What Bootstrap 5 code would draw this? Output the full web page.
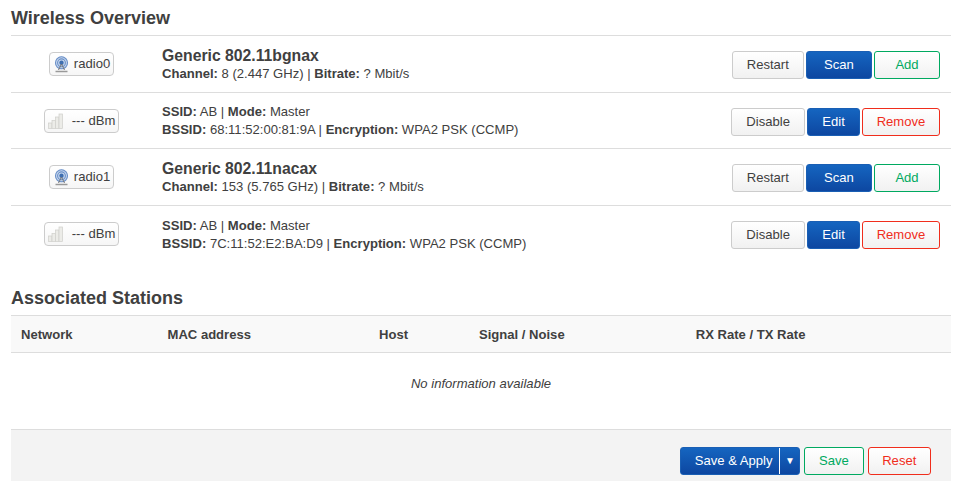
<!DOCTYPE html>
<html lang="en">
<head>
  <meta charset="UTF-8">
  <meta name="viewport" content="width=device-width, initial-scale=1">
  <title>Wireless Overview</title>
  <link href="https://cdn.jsdelivr.net/npm/bootstrap@5.3.0/dist/css/bootstrap.min.css" rel="stylesheet">
  <style>
    html, body { height: 481px; overflow: hidden; }
    body { font-family: "Liberation Sans", Arial, sans-serif; font-size: 13.07px; line-height: 18px; color: #404040; background: #fff; }
    .page-wrap { padding: 0 7px 0 11px; }
    .sec-title { font-size: 18px; line-height: 27px; font-weight: 700; color: #404040; margin: 0; padding: 5px 0 3px; border-bottom: 1px solid #ddd; height: 36px; }
    .wifi-row { border-bottom: 1px solid #ddd; height: 56.5px; }
    .wifi-row.no-line { border-bottom: 0; }
    .col-badge { width: 141px; padding-top: 2px; }
    .col-info { padding: 2px 0 0 10px; }
    .dev-name { font-size: 15.75px; line-height: 19px; font-weight: 700; }
    .if-badge { display: inline-flex; align-items: center; height: 24px; padding: 0 3px; border: 1px solid #ccc; border-radius: 4px; background: linear-gradient(#fff, #f6f6f6); color: #404040; }
    .if-radio svg { margin-right: 4px; }
    .if-signal svg { margin-right: 8px; }
    .row-btns { padding-right: 11px; gap: 2px; margin-top: 3px; }
    .act-btn { font-size: 13.07px; line-height: 18px; height: 28px; padding: 4px 13.7px; border-radius: 3px; border: 1px solid #ccc; background: linear-gradient(#fff, #f1f1f1); color: #404040; }
    .act-plain { padding: 4px 14.2px; }
    .act-blue, .act-blue:hover { border-color: #1a5fb4; color: #fff; background: linear-gradient(#1565c0, #0d47a1); }
    .act-green, .act-green:hover { border-color: #00a960; color: #00a960; }
    .act-red, .act-red:hover { border-color: #f02d1c; color: #f02d1c; }
    .wide-btn { min-width: 66px; }
    .sec-two { margin-top: 18px; }
    .sta-head { height: 37px; padding-top: 2px; background: #f9f9f9; border-bottom: 1px solid #ddd; font-weight: 700; }
    .sta-head > div { padding: 0 10px; }
    .w-net { width: 146.5px; } .w-mac { width: 211.5px; } .w-host { width: 100px; } .w-sig { width: 216.8px; }
    .sta-empty { height: 61px; font-style: italic; }
    .foot-bar { margin-top: 15px; height: 52px; background: #f3f3f3; border-top: 1px solid #ddd; padding: 17px 20px 0 0; gap: 4px; }
    .split-btn { padding: 0; display: flex; align-items: stretch; width: 120px; }
    .split-main { padding: 4px 6px 4px 12.5px; border-right: 1px solid #fff; width: 99px; white-space: nowrap; }
    .split-arrow { flex-grow: 1; font-size: 10px; display: flex; align-items: center; justify-content: center; }
  </style>
</head>
<body>
  <div class="page-wrap">
    <h2 class="sec-title">Wireless Overview</h2>

    <div class="wifi-row d-flex align-items-center">
      <div class="col-badge text-center"><span class="if-badge if-radio">
        <svg width="17" height="17" viewBox="0 0 17 17"><circle cx="8.5" cy="6.8" r="6.5" fill="#c9d8ee"/><g fill="none" stroke="#6a90c8" stroke-width="1.1"><circle cx="8.5" cy="6.8" r="6"/><circle cx="8.5" cy="6.8" r="3.9"/></g><circle cx="8.5" cy="6.8" r="2.2" fill="#3f6fb0"/><path d="M8.5 8L5.5 14M8.5 8L11.5 14" stroke="#777" stroke-width="1"/><path d="M2.5 15.5H14.5" stroke="#999" stroke-width="1.5"/></svg>radio0</span></div>
      <div class="col-info flex-grow-1"><div class="dev-name">Generic 802.11bgnax</div><div><b>Channel:</b> 8 (2.447 GHz) | <b>Bitrate:</b> ? Mbit/s</div></div>
      <div class="row-btns d-flex"><button class="btn act-btn act-plain">Restart</button><button class="btn act-btn act-blue wide-btn">Scan</button><button class="btn act-btn act-green wide-btn">Add</button></div>
    </div>

    <div class="wifi-row d-flex align-items-center">
      <div class="col-badge text-center"><span class="if-badge if-signal">
        <svg width="16" height="16" viewBox="0 0 16 16" fill="#ecece8" stroke="#cfcfca" stroke-width=".7"><rect x=".5" y="10" width="3.5" height="5.5"/><rect x="4" y="7.5" width="3.5" height="8"/><rect x="7.5" y="4" width="3.5" height="11.5"/><rect x="11" y="1" width="3.5" height="14.5"/></svg>--- dBm</span></div>
      <div class="col-info flex-grow-1"><div><b>SSID:</b> AB | <b>Mode:</b> Master</div><div><b>BSSID:</b> 68:11:52:00:81:9A | <b>Encryption:</b> WPA2 PSK (CCMP)</div></div>
      <div class="row-btns d-flex"><button class="btn act-btn act-plain">Disable</button><button class="btn act-btn act-blue act-plain">Edit</button><button class="btn act-btn act-red">Remove</button></div>
    </div>

    <div class="wifi-row d-flex align-items-center">
      <div class="col-badge text-center"><span class="if-badge if-radio">
        <svg width="17" height="17" viewBox="0 0 17 17"><circle cx="8.5" cy="6.8" r="6.5" fill="#c9d8ee"/><g fill="none" stroke="#6a90c8" stroke-width="1.1"><circle cx="8.5" cy="6.8" r="6"/><circle cx="8.5" cy="6.8" r="3.9"/></g><circle cx="8.5" cy="6.8" r="2.2" fill="#3f6fb0"/><path d="M8.5 8L5.5 14M8.5 8L11.5 14" stroke="#777" stroke-width="1"/><path d="M2.5 15.5H14.5" stroke="#999" stroke-width="1.5"/></svg>radio1</span></div>
      <div class="col-info flex-grow-1"><div class="dev-name">Generic 802.11nacax</div><div><b>Channel:</b> 153 (5.765 GHz) | <b>Bitrate:</b> ? Mbit/s</div></div>
      <div class="row-btns d-flex"><button class="btn act-btn act-plain">Restart</button><button class="btn act-btn act-blue wide-btn">Scan</button><button class="btn act-btn act-green wide-btn">Add</button></div>
    </div>

    <div class="wifi-row no-line d-flex align-items-center">
      <div class="col-badge text-center"><span class="if-badge if-signal">
        <svg width="16" height="16" viewBox="0 0 16 16" fill="#ecece8" stroke="#cfcfca" stroke-width=".7"><rect x=".5" y="10" width="3.5" height="5.5"/><rect x="4" y="7.5" width="3.5" height="8"/><rect x="7.5" y="4" width="3.5" height="11.5"/><rect x="11" y="1" width="3.5" height="14.5"/></svg>--- dBm</span></div>
      <div class="col-info flex-grow-1"><div><b>SSID:</b> AB | <b>Mode:</b> Master</div><div><b>BSSID:</b> 7C:11:52:E2:BA:D9 | <b>Encryption:</b> WPA2 PSK (CCMP)</div></div>
      <div class="row-btns d-flex"><button class="btn act-btn act-plain">Disable</button><button class="btn act-btn act-blue act-plain">Edit</button><button class="btn act-btn act-red">Remove</button></div>
    </div>

    <h2 class="sec-title sec-two">Associated Stations</h2>
    <div class="sta-head d-flex align-items-center">
      <div class="w-net">Network</div><div class="w-mac">MAC address</div><div class="w-host">Host</div><div class="w-sig">Signal / Noise</div><div>RX Rate / TX Rate</div>
    </div>
    <div class="sta-empty d-flex align-items-center justify-content-center">No information available</div>

    <div class="foot-bar d-flex justify-content-end align-items-start">
      <button class="btn act-btn act-blue split-btn"><span class="split-main">Save &amp; Apply</span><span class="split-arrow">▼</span></button>
      <button class="btn act-btn act-green">Save</button>
      <button class="btn act-btn act-red">Reset</button>
    </div>
  </div>
  <script src="https://cdn.jsdelivr.net/npm/bootstrap@5.3.0/dist/js/bootstrap.bundle.min.js"></script>
</body>
</html>
